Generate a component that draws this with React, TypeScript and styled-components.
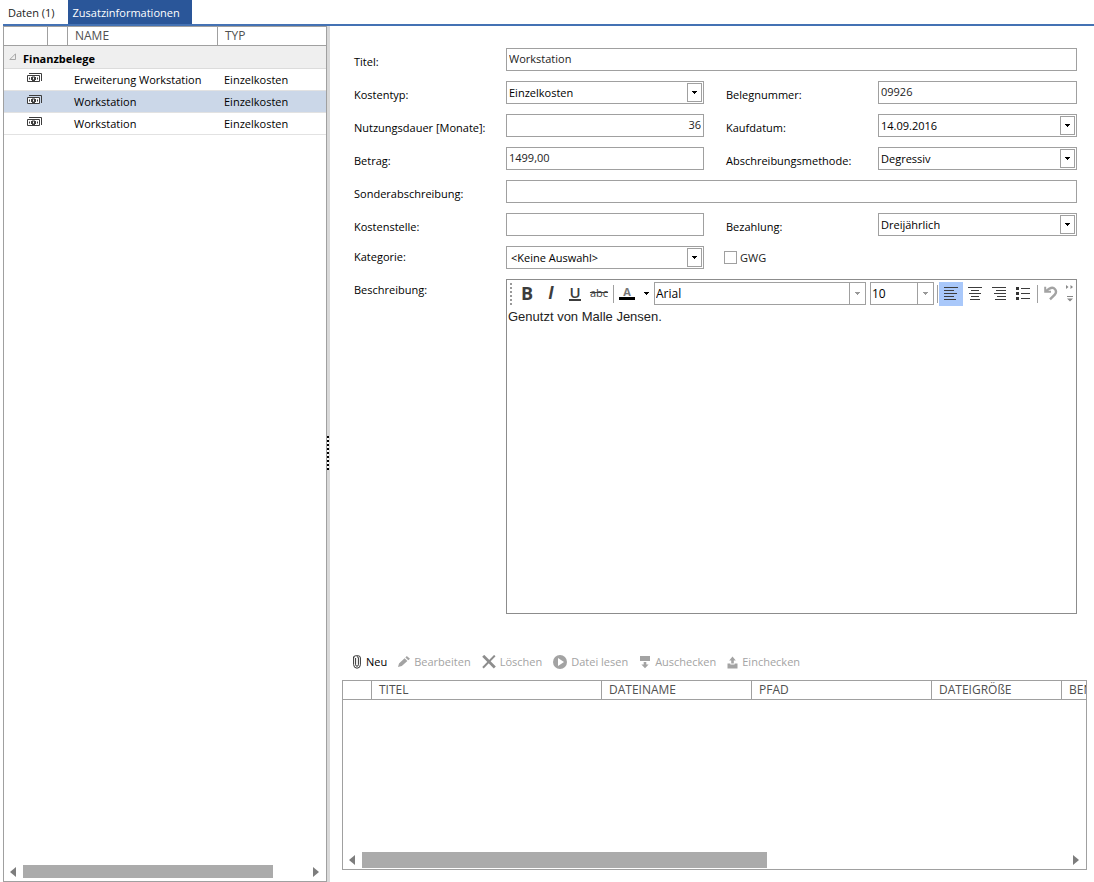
import React from "react";
import styled, { createGlobalStyle, css } from "styled-components";

const line = "#a0a0a0";
const muted = "#a3a3a3";
const ui = `"Open Sans", "Noto Sans", sans-serif`;

const GlobalStyle = createGlobalStyle`
  *, *::before, *::after { box-sizing: border-box; }
  body { margin: 0; background: #fff; color: #000; font: 11px/16px ${ui}; }
  button, input, select, textarea { font: inherit; color: inherit; margin: 0; padding: 0; border: 0; border-radius: 0; background: transparent; outline: none; }
  svg { display: block; flex: none; }
`;

const Page = styled.div`
  display: flex;
  flex-direction: column;
  min-height: 100vh;
`;

const TabBar = styled.nav`
  display: flex;
  height: 26px;
  margin-left: 3px;
  border-bottom: 2px solid #4472b4;
`;

const Tab = styled.button<{ $active?: boolean }>`
  padding: 2px ${(p) => (p.$active ? "12px 0 5px" : "13px 0 5px")};
  color: ${(p) => (p.$active ? "#fff" : "#222")};
  background: ${(p) => (p.$active ? "#2a5699" : "transparent")};
`;

const Body = styled.div`
  display: flex;
  flex: 1;
`;

const Sidebar = styled.aside`
  display: flex;
  flex-direction: column;
  width: 323px;
  flex: none;
  margin-left: 3px;
  border: 1px solid ${line};
  border-right: 0;
`;

const Splitter = styled.div`
  display: flex;
  align-items: center;
  width: 4px;
  flex: none;
  background: #d9d9d9;
  border-left: 1px solid ${line};
`;

const Grip = styled.div`
  width: 2px;
  height: 34px;
  margin-bottom: 2px;
  background: repeating-linear-gradient(#000 0 2px, #fff 2px 4px);
`;

const Table = styled.table<{ $width?: string }>`
  width: ${(p) => p.$width || "100%"};
  table-layout: fixed;
  border-collapse: separate;
  border-spacing: 0;
`;

const HeadCell = styled.th`
  height: 19px;
  padding: 0 7px;
  text-align: left;
  font-weight: 400;
  font-size: 12px;
  line-height: 18px;
  color: #505050;
  white-space: nowrap;
  border-bottom: 1px solid ${line};
  & + & { border-left: 1px solid ${line}; }
`;

const GroupCell = styled.th`
  height: 23px;
  padding: 3px 5px 0;
  text-align: left;
  font-weight: 700;
  background: #efefef;
  border-bottom: 1px solid #dcdcdc;
`;

const GroupLabel = styled.span`
  display: flex;
  align-items: center;
  gap: 7px;
`;

const GroupMarker = styled.svg`
  margin-bottom: 4px;
`;

const Row = styled.tr<{ $selected?: boolean }>`
  background: ${(p) => (p.$selected ? "#cbd7e8" : "transparent")};
`;

const Cell = styled.td`
  height: 22px;
  padding: 1px 7px 0;
  white-space: nowrap;
  border-bottom: 1px solid #e2e2e2;
`;

const MoneyCell = styled(Cell)`
  padding: 0 0 4px 23px;
`;

const ScrollBar = styled.div`
  display: flex;
  align-items: center;
  gap: 6px;
  height: 18px;
  margin-top: auto;
  padding: 0 6px 1px;
`;

const ScrollButton = styled.button`
  width: 7px;
  height: 15px;
  display: flex;
  align-items: center;
`;

const Track = styled.div<{ $thick?: boolean }>`
  flex: 1;
  height: ${(p) => (p.$thick ? 16 : 13)}px;
`;

const Thumb = styled.div<{ $share: number }>`
  width: ${(p) => p.$share}%;
  height: 100%;
  background: #ababab;
`;

const Main = styled.main`
  display: flex;
  flex-direction: column;
  flex: 1;
  min-width: 0;
  padding: 22px 7px 12px 12px;
`;

const Form = styled.form`
  display: grid;
  grid-template-columns: 152px 198fr 174px 199fr;
  grid-template-rows: repeat(7, 23px) minmax(335px, 1fr);
  row-gap: 10px;
  flex: 1;
  padding: 0 10px 0 12px;
`;

const Label = styled.label<{ $second?: boolean; $raised?: boolean }>`
  padding-top: ${(p) => (p.$raised ? 3 : 6)}px;
  padding-left: ${(p) => (p.$second ? 22 : 0)}px;
  white-space: nowrap;
`;

const frame = css`
  border: 1px solid ${line};
  background: #fff;
`;

const TextInput = styled.input<{ $wide?: boolean; $right?: boolean }>`
  && {
    ${frame}
    min-width: 0;
    width: 100%;
    height: 23px;
    padding: 0 2px 2px;
    color: #222;
    grid-column: ${(p) => (p.$wide ? "2 / -1" : "auto")};
    text-align: ${(p) => (p.$right ? "right" : "left")};
  }
`;

const Combo = styled.div`
  ${frame}
  display: flex;
  height: 23px;
  min-width: 0;
  padding: 1px;
  position: relative;
`;

const ComboSelect = styled.select<{ $indent?: boolean }>`
  && {
    appearance: none;
    flex: 1;
    min-width: 0;
    width: 100%;
    padding-left: ${(p) => (p.$indent ? 3 : 1)}px;
  }
`;

const ComboInput = styled.input`
  && {
    flex: 1;
    min-width: 0;
    padding-left: 1px;
  }
`;

const DropBox = styled.span`
  display: flex;
  align-items: center;
  justify-content: center;
  position: absolute;
  top: 1px;
  right: 1px;
  bottom: 1px;
  width: 15px;
  border: 1px solid ${line};
  pointer-events: none;
`;

const DropButton = styled.button`
  && {
    display: flex;
    align-items: center;
    justify-content: center;
    width: 15px;
    border: 1px solid ${line};
  }
`;

const CheckLabel = styled.label`
  grid-column: 3 / -1;
  display: flex;
  align-items: center;
  gap: 3px;
  padding-left: 20px;
  color: #222;
`;

const CheckBox = styled.input`
  && {
    appearance: none;
    width: 13px;
    height: 13px;
    ${frame}
  }
`;

const Editor = styled.div`
  grid-column: 2 / -1;
  display: flex;
  flex-direction: column;
  min-width: 0;
  border: 1px solid #8c8c8c;
`;

const EditorTools = styled.div`
  display: flex;
  align-items: center;
  height: 27px;
  padding: 1px;
`;

const DotHandle = styled.span`
  width: 2px;
  height: 22px;
  margin: 0 3px 0 2px;
  background: repeating-linear-gradient(#999 0 2px, #fff 2px 4px);
`;

const ToolButton = styled.button<{ $on?: boolean; $width?: number }>`
  && {
    display: flex;
    align-items: center;
    justify-content: center;
    flex: none;
    width: ${(p) => p.$width || 24}px;
    height: 24px;
    padding-bottom: 1px;
    color: #3c3c3c;
    background: ${(p) => (p.$on ? "#a9c8fa" : "transparent")};
  }
`;

const Bold = styled.b`
  padding-bottom: 1px;
  font: 700 18px/20px ${ui};
`;

const Italic = styled.i`
  padding-bottom: 1px;
  font: italic 700 17px/20px ${ui};
`;

const Underline = styled.span`
  width: 12px;
  font: 600 15px/14px ${ui};
  border-bottom: 2px solid #3c3c3c;
`;

const Strike = styled.s`
  font: 11px/16px ${ui};
`;

const ColorLetter = styled.span`
  width: 16px;
  font: 700 11px/10px ${ui};
  color: #777;
  border-bottom: 3px solid #000;
`;

const ToolLine = styled.span`
  width: 1px;
  height: 18px;
  margin: 0 1px 0 2px;
  background: ${line};
`;

const FontCombo = styled.div<{ $width?: number }>`
  ${frame}
  display: flex;
  position: relative;
  flex: ${(p) => (p.$width ? `0 0 ${p.$width}px` : "1")};
  height: 23px;
  margin-right: ${(p) => (p.$width ? 1 : 4)}px;
  font-size: 12px;
`;

const FontDrop = styled.span`
  display: flex;
  align-items: center;
  justify-content: center;
  position: absolute;
  top: 0;
  right: 0;
  bottom: 0;
  width: 16px;
  border-left: 1px solid ${line};
  pointer-events: none;
`;

const EditorText = styled.textarea`
  && {
    flex: 1;
    width: 100%;
    resize: none;
    padding: 2px 1px;
    color: #222;
    font: 13px/16px "Liberation Sans", Arial, sans-serif;
  }
`;

const Actions = styled.div`
  display: flex;
  align-items: center;
  gap: 11px;
  height: 20px;
  margin-top: 38px;
  padding-left: 10px;
`;

const Action = styled.button<{ $enabled?: boolean }>`
  && {
    display: flex;
    align-items: center;
    gap: 4px;
    color: ${(p) => (p.$enabled ? "#000" : muted)};
  }
`;

const Attachments = styled.section`
  display: flex;
  flex-direction: column;
  min-height: 190px;
  margin-top: 8px;
  overflow: hidden;
  border: 1px solid ${line};
`;

const Arrow = ({ color = "#000" }: { color?: string }) => (
  <svg width="5" height="3" viewBox="0 0 5 3" shapeRendering="crispEdges" aria-hidden="true">
    <path d="M0 0H5V1H4V2H3V3H2V2H1V1H0Z" fill={color} />
  </svg>
);

const MoneyIcon = () => (
  <svg width="15" height="10" viewBox="0 0 15 10" aria-hidden="true">
    <path d="M2 .5H14.5V8" fill="none" stroke="#3c3c3c" />
    <path d="M.5 2.5H12.5V8.5H.5Z" fill="#fff" stroke="#3c3c3c" />
    <path d="M5 3.5H8V4H9V7H8V8H5V7H4V4H5Z" fill="#3c3c3c" />
    <path d="M6.5 4.5V6.5" stroke="#fff" />
    <path d="M2.5 4.5V6.5M10.5 4.5V6.5" stroke="#3c3c3c" />
  </svg>
);

const HScroll = ({ share, thick }: { share: number; thick?: boolean }) => (
  <ScrollBar>
    <ScrollButton type="button" aria-label="Nach links">
      <svg width="6" height="10" viewBox="0 0 6 10"><path d="M6 0V10L0 5Z" fill="#7d7d7d" /></svg>
    </ScrollButton>
    <Track $thick={thick}><Thumb $share={share} /></Track>
    <ScrollButton type="button" aria-label="Nach rechts">
      <svg width="6" height="10" viewBox="0 0 6 10"><path d="M0 0V10L6 5Z" fill="#7d7d7d" /></svg>
    </ScrollButton>
  </ScrollBar>
);

const Lines = ({ d }: { d: string }) => (
  <svg width="16" height="15" viewBox="0 0 16 15" shapeRendering="crispEdges" aria-hidden="true">
    <path d={d} stroke="#3c3c3c" fill="none" />
  </svg>
);

const SelectField = ({ id, value, indent }: { id: string; value: string; indent?: boolean }) => (
  <Combo>
    <ComboSelect id={id} $indent={indent} defaultValue={value}><option>{value}</option></ComboSelect>
    <DropBox><Arrow /></DropBox>
  </Combo>
);

const records = [
  { name: "Erweiterung Workstation", type: "Einzelkosten" },
  { name: "Workstation", type: "Einzelkosten", selected: true },
  { name: "Workstation", type: "Einzelkosten" },
];

const actions = [
  {
    label: "Neu",
    enabled: true,
    icon: (
      <svg width="10" height="14" viewBox="0 0 10 14">
        <path d="M1.6 1.6V9.6Q1.8 13.2 5 13.2T8.4 9.8V3Q8.4 .8 6.2 .8H3.4Q1.6 .8 1.6 3M3.6 3V9.8Q3.7 11.2 5 11.2T6.4 9.8V2.8Q6.3 1.8 5 1.8" fill="none" stroke="#333" />
      </svg>
    ),
  },
  {
    label: "Bearbeiten",
    icon: (
      <svg width="12" height="12" viewBox="0 0 12 12">
        <path d="M0 11L1 7.4 6.6 2.2 9.4 5 3.8 10ZM7.4 1.4L8.8 0 12 2.8 10.3 4.3Z" fill={muted} />
      </svg>
    ),
  },
  {
    label: "Löschen",
    icon: (
      <svg width="14" height="14" viewBox="0 0 14 14">
        <path d="M1.2 .8L12.8 12.4" stroke="#8d8d8d" strokeWidth="2.8" />
        <path d="M12.8 .6L1 12.8" stroke="#8d8d8d" strokeWidth="2" />
      </svg>
    ),
  },
  {
    label: "Datei lesen",
    icon: (
      <svg width="14" height="14" viewBox="0 0 14 14">
        <circle cx="7" cy="7" r="7" fill={muted} />
        <path d="M5 3L11 7 5 11Z" fill="#fff" />
      </svg>
    ),
  },
  {
    label: "Auschecken",
    icon: (
      <svg width="12" height="13" viewBox="0 0 12 13">
        <path d="M1 0H11V5H1Z" fill={muted} />
        <path d="M4.7 6H7.3V8.4H9.6L6 12.2 2.4 8.4H4.7Z" fill={muted} />
      </svg>
    ),
  },
  {
    label: "Einchecken",
    icon: (
      <svg width="11" height="13" viewBox="0 0 11 13">
        <path d="M.5 7.4H3.4V8.4H7.6V7.4H10.5V12.4H.5Z" fill={muted} />
        <path d="M4.2 7.4V4.4H2.2L5.5 .6 8.8 4.4H6.8V7.4Z" fill={muted} />
      </svg>
    ),
  },
];

export default function App() {
  return (
    <Page>
      <GlobalStyle />
      <TabBar>
        <Tab type="button">Daten (1)</Tab>
        <Tab type="button" $active>Zusatzinformationen</Tab>
      </TabBar>
      <Body>
        <Sidebar>
          <Table>
            <colgroup>
              <col style={{ width: 43 }} />
              <col style={{ width: 20 }} />
              <col style={{ width: 150 }} />
              <col />
            </colgroup>
            <thead>
              <tr>
                <HeadCell aria-label="Symbol" />
                <HeadCell aria-label="Status" />
                <HeadCell>NAME</HeadCell>
                <HeadCell>TYP</HeadCell>
              </tr>
            </thead>
            <tbody>
              <tr>
                <GroupCell colSpan={4}>
                  <GroupLabel>
                    <GroupMarker width="7" height="7" viewBox="0 0 7 7"><path d="M6.5 .8V6.5H.8Z" fill="none" stroke="#a8a8a8" /></GroupMarker>
                    Finanzbelege
                  </GroupLabel>
                </GroupCell>
              </tr>
              {records.map((r, i) => (
                <Row key={i} $selected={r.selected}>
                  <MoneyCell colSpan={2}><MoneyIcon /></MoneyCell>
                  <Cell>{r.name}</Cell>
                  <Cell>{r.type}</Cell>
                </Row>
              ))}
            </tbody>
          </Table>
          <HScroll share={88} />
        </Sidebar>
        <Splitter><Grip /></Splitter>
        <Main>
          <Form>
            <Label htmlFor="titel">Titel:</Label>
            <TextInput id="titel" $wide defaultValue="Workstation" />

            <Label htmlFor="kostentyp">Kostentyp:</Label>
            <SelectField id="kostentyp" value="Einzelkosten" />
            <Label htmlFor="beleg" $second>Belegnummer:</Label>
            <TextInput id="beleg" defaultValue="09926" />

            <Label htmlFor="dauer">Nutzungsdauer [Monate]:</Label>
            <TextInput id="dauer" $right defaultValue="36" />
            <Label htmlFor="datum" $second>Kaufdatum:</Label>
            <Combo>
              <ComboInput id="datum" defaultValue="14.09.2016" />
              <DropButton type="button" aria-label="Kalender"><Arrow /></DropButton>
            </Combo>

            <Label htmlFor="betrag">Betrag:</Label>
            <TextInput id="betrag" defaultValue="1499,00" />
            <Label htmlFor="methode" $second>Abschreibungsmethode:</Label>
            <SelectField id="methode" value="Degressiv" />

            <Label htmlFor="sonder">Sonderabschreibung:</Label>
            <TextInput id="sonder" $wide />

            <Label htmlFor="stelle">Kostenstelle:</Label>
            <TextInput id="stelle" />
            <Label htmlFor="zahlung" $second>Bezahlung:</Label>
            <SelectField id="zahlung" value="Dreijährlich" />

            <Label htmlFor="kategorie" $raised>Kategorie:</Label>
            <SelectField id="kategorie" value="<Keine Auswahl>" indent />
            <CheckLabel><CheckBox type="checkbox" />GWG</CheckLabel>

            <Label htmlFor="text" $raised>Beschreibung:</Label>
            <Editor>
              <EditorTools>
                <DotHandle />
                <ToolButton type="button" aria-label="Fett"><Bold>B</Bold></ToolButton>
                <ToolButton type="button" aria-label="Kursiv"><Italic>I</Italic></ToolButton>
                <ToolButton type="button" aria-label="Unterstrichen"><Underline>U</Underline></ToolButton>
                <ToolButton type="button" aria-label="Durchgestrichen"><Strike>abc</Strike></ToolButton>
                <ToolLine />
                <ToolButton type="button" aria-label="Schriftfarbe"><ColorLetter>A</ColorLetter></ToolButton>
                <ToolButton type="button" aria-label="Farbauswahl" $width={15}><Arrow /></ToolButton>
                <FontCombo>
                  <ComboSelect aria-label="Schriftart" defaultValue="Arial"><option>Arial</option></ComboSelect>
                  <FontDrop><Arrow color="#999" /></FontDrop>
                </FontCombo>
                <FontCombo $width={64}>
                  <ComboSelect aria-label="Schriftgröße" defaultValue="10"><option>10</option></ComboSelect>
                  <FontDrop><Arrow color="#999" /></FontDrop>
                </FontCombo>
                <ToolLine />
                <ToolButton type="button" aria-label="Linksbündig" $on>
                  <Lines d="M1 1.5H15M1 4.5H11M1 7.5H14M1 10.5H11M1 13.5H13" />
                </ToolButton>
                <ToolButton type="button" aria-label="Zentriert">
                  <Lines d="M1 1.5H15M4 4.5H12M2 7.5H14M4 10.5H12M3 13.5H13" />
                </ToolButton>
                <ToolButton type="button" aria-label="Rechtsbündig">
                  <Lines d="M1 1.5H15M5 4.5H15M3 7.5H15M6 10.5H15M4 13.5H15" />
                </ToolButton>
                <ToolButton type="button" aria-label="Aufzählung">
                  <svg width="16" height="15" viewBox="0 0 16 15" shapeRendering="crispEdges">
                    <path d="M1 1H4V4H1ZM1 6H4V9H1ZM1 11H4V14H1Z" fill="#333" />
                    <path d="M6 2.5H15M6 7.5H15M6 12.5H15" stroke="#3c3c3c" />
                  </svg>
                </ToolButton>
                <ToolLine />
                <ToolButton type="button" aria-label="Rückgängig">
                  <svg width="14" height="15" viewBox="0 0 14 15">
                    <path d="M2 5L5.5 2.6Q9 .8 11 3.2T11 8.4L6 13.4" fill="none" stroke={muted} strokeWidth="2.4" />
                    <path d="M1.2 .8V5.8H7" fill="none" stroke={muted} strokeWidth="2" />
                  </svg>
                </ToolButton>
                <ToolButton type="button" aria-label="Weitere" $width={12}>
                  <svg width="9" height="18" viewBox="0 0 9 18">
                    <path d="M1 1L3.5 3 1 5ZM5.5 1L8 3 5.5 5ZM2 12H8V13H2ZM2 14.5H8L5 17.5Z" fill="#888" />
                  </svg>
                </ToolButton>
              </EditorTools>
              <EditorText id="text" spellCheck={false} defaultValue="Genutzt von Malle Jensen." />
            </Editor>
          </Form>

          <Actions>
            {actions.map((a) => (
              <Action key={a.label} type="button" $enabled={a.enabled}>{a.icon}{a.label}</Action>
            ))}
          </Actions>
          <Attachments>
            <Table $width="849px">
              <colgroup>
                <col style={{ width: 28 }} />
                <col style={{ width: 230 }} />
                <col style={{ width: 150 }} />
                <col style={{ width: 180 }} />
                <col style={{ width: 130 }} />
                <col />
              </colgroup>
              <thead>
                <tr>
                  <HeadCell aria-label="Symbol" />
                  <HeadCell>TITEL</HeadCell>
                  <HeadCell>DATEINAME</HeadCell>
                  <HeadCell>PFAD</HeadCell>
                  <HeadCell>DATEIGRÖßE</HeadCell>
                  <HeadCell>BENUTZER</HeadCell>
                </tr>
              </thead>
            </Table>
            <HScroll share={57.5} thick />
          </Attachments>
        </Main>
      </Body>
    </Page>
  );
}
